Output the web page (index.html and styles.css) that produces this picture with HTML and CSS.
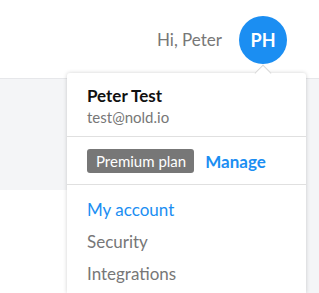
FILE: index.html
```html
<!DOCTYPE html>
<html>
<head>
<meta charset="utf-8">
<link rel="stylesheet" href="styles.css">
</head>
<body>
<header class="topbar">
  <span class="greeting">Hi, Peter</span>
  <div class="avatar">PH</div>
</header>
<div class="page">
  <main class="main">
    <div class="band"></div>
  </main>
  <aside class="side"></aside>
</div>
<div class="dropdown">
  <div class="caret"></div>
  <div class="section user">
    <div class="name">Peter Test</div>
    <div class="email">test@nold.io</div>
  </div>
  <div class="section plan">
    <span class="badge">Premium plan</span>
    <a class="manage">Manage</a>
  </div>
  <nav class="section menu">
    <a class="item active">My account</a>
    <a class="item">Security</a>
    <a class="item">Integrations</a>
  </nav>
</div>
</body>
</html>
```
FILE: styles.css
```css
html, body {
  margin: 0;
  padding: 0;
  height: 100%;
  background: #fff;
  font-family: Lato, "Open Sans", sans-serif;
  overflow: hidden;
}
.topbar {
  height: 79px;
  display: flex;
  justify-content: flex-end;
  align-items: center;
  padding-right: 32px;
  gap: 17px;
  box-sizing: border-box;
  border-bottom: 1px solid #e6e7ea;
}
.greeting {
  font-size: 17px;
  color: #777;
}
.avatar {
  width: 48px;
  height: 48px;
  border-radius: 50%;
  background: #1b8ef2;
  color: #fff;
  font-size: 18px;
  font-weight: 700;
  display: flex;
  align-items: center;
  justify-content: center;
  margin-top: 1px;
}
.page {
  display: flex;
  height: 214px;
}
.main {
  flex: 1;
}
.band {
  height: 111px;
  background: #f4f5f7;
}
.side {
  width: 13px;
  background: #f4f5f7;
}
.dropdown {
  position: absolute;
  top: 73px;
  left: 67px;
  width: 239px;
  height: 220px;
  background: #fff;
  border-radius: 3px 3px 0 0;
  box-shadow: 0 0 4px rgba(0,0,0,0.18);
}
.caret {
  position: absolute;
  top: -6px;
  left: 190px;
  width: 11px;
  height: 11px;
  background: #fff;
  border-left: 1px solid #d8d8d8;
  border-top: 1px solid #d8d8d8;
  transform: rotate(45deg);
}
.section {
  position: relative;
  padding-left: 20px;
  border-bottom: 1px solid #e0e0e0;
}
.user {
  padding-top: 13px;
  padding-bottom: 10px;
}
.name {
  font-size: 17px;
  line-height: 20px;
  font-weight: 700;
  color: #111;
}
.email {
  font-size: 15px;
  line-height: 18px;
  margin-top: 2px;
  color: #777;
}
.plan {
  display: flex;
  align-items: center;
  gap: 11px;
  padding-top: 12px;
  padding-bottom: 11px;
}
.badge {
  height: 24px;
  line-height: 24px;
  padding: 0 8px 0 9px;
  background: #777;
  color: #fff;
  font-size: 15px;
  border-radius: 3px;
}
.manage {
  font-size: 17px;
  font-weight: 700;
  color: #1b8ef2;
}
.menu {
  border-bottom: none;
  padding-top: 9px;
  display: flex;
  flex-direction: column;
}
.item {
  font-size: 17px;
  line-height: 32px;
  color: #777;
}
.item.active {
  color: #1b8ef2;
}
```
